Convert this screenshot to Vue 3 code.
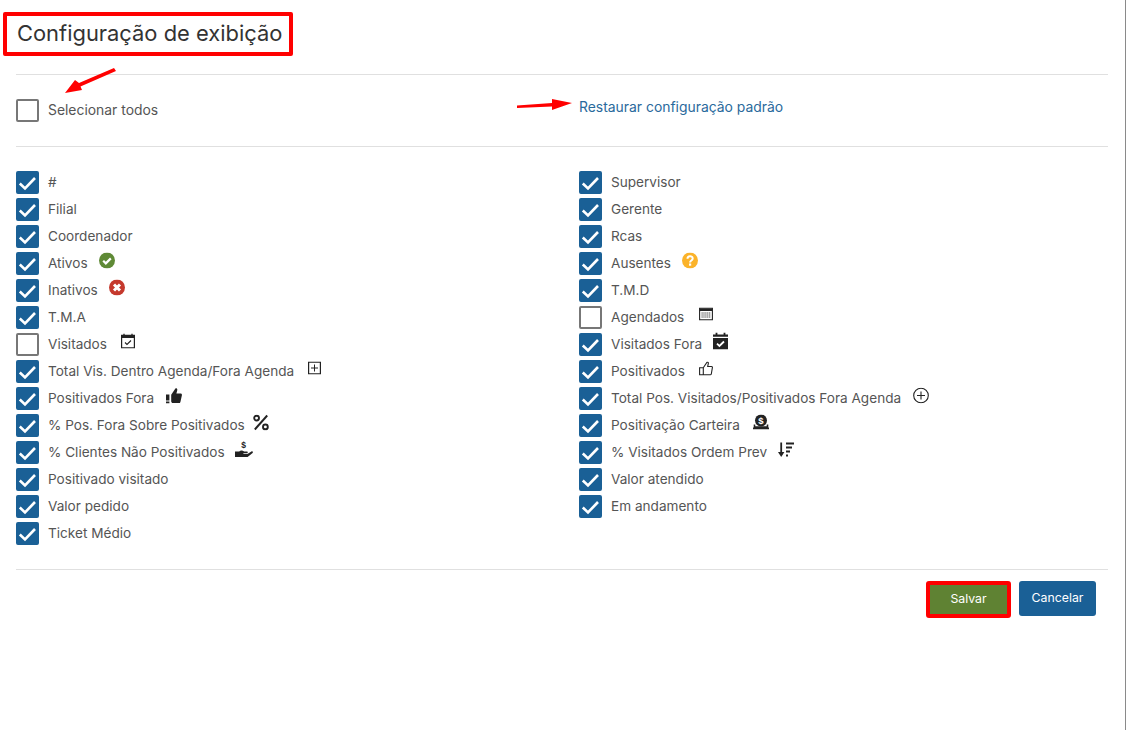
<script setup>
const icons = {
  ok: { vb: '0 0 16 16', w: 16, h: 16, gap: 11, svg: '<circle cx="8" cy="8" r="8" fill="#5f8a36"/><path d="M4.200 8.300l2.600 2.600 5-5" fill="none" stroke="#fff" stroke-width="2.200"/>' },
  no: { vb: '0 0 16 16', w: 16, h: 16, gap: 11, svg: '<circle cx="8" cy="8" r="8" fill="#c5392d"/><path d="M5 5l6 6M11 5l-6 6" fill="none" stroke="#fff" stroke-width="3"/>' },
  help: { vb: '0 0 16 16', w: 16, h: 16, gap: 11, svg: '<circle cx="8" cy="8" r="8" fill="#fbb32a"/><path d="M5.500 6.200c0-3.200 5.200-3.200 5.200-.2 0 2-2.600 1.900-2.600 3.900" fill="none" stroke="#fff" stroke-width="2"/><rect x="7" y="11" width="2.200" height="2.200" fill="#fff"/>' },
  calCheck: { vb: '0 0 14 15', w: 14, h: 15, gap: 14, svg: '<path d="M3 0v2M11 0v2" stroke="#222" stroke-width="1.300"/><path d="M.6 1.800h12.800v12.600H.6z" fill="none" stroke="#222" stroke-width="1.200"/><path d="M.6 2h12.800v2.600H.6z" fill="#222"/><path d="M4 9l2 2 4-4" fill="none" stroke="#222" stroke-width="1.100"/>' },
  plusBox: { vb: '0 0 13 13', w: 13, h: 13, gap: 14, svg: '<path d="M.6.6h11.800v11.800H.6z" fill="none" stroke="#222" stroke-width="1.200"/><path d="M6.500 3v7M3 6.500h7" stroke="#222" stroke-width="1"/>' },
  thumbFill: { vb: '0 0 16 16', w: 16, h: 16, gap: 12, svg: '<path d="M5.200 7.200L9.400 1c1.400-.6 2.200.6 1.800 1.900L10.400 6h4.200c1 0 1.500.9 1.300 1.800l-1.500 6.600c-.2.8-.9 1.200-1.600 1.200H7c-1 0-1.800-.8-1.800-1.800z" fill="#222"/><path d="M0 7h3.400v6H0zM0 14h3.400v2H0z" fill="#222"/>' },
  percent: { vb: '0 0 16 16', w: 16, h: 16, gap: 8, svg: '<circle cx="3.600" cy="3.600" r="2.400" fill="none" stroke="#222" stroke-width="1.900"/><circle cx="12.400" cy="12.400" r="2.400" fill="none" stroke="#222" stroke-width="1.900"/><path d="M14.200 1L1.800 15" stroke="#222" stroke-width="1.900"/>' },
  hand: { vb: '0 0 18 17', w: 18, h: 17, gap: 10, svg: '<text x="6.200" y="7" font-family="Liberation Sans, sans-serif" font-size="8.500" font-weight="700" fill="#222">$</text><path d="M0 11h4.200c1.300-1.400 3.200-1.400 5 0h2.600c1.300 0 1.300 1.800 0 1.800H8.400v.7h4L16.400 11c1.200-.6 2 .6 1.200 1.400L12.600 16.400H0z" fill="#222"/>' },
  calTable: { vb: '0 0 14 13', w: 14, h: 13, gap: 15, svg: '<path d="M.6.6h12.800v11.800H.6z" fill="none" stroke="#222" stroke-width="1.100"/><path d="M.6 1h12.800v2.400H.6z" fill="#222"/><path d="M2.500 5.500h9M2.500 7.500h9M2.500 9.500h9" stroke="#333" stroke-width="1" stroke-dasharray="1.200 .7"/>' },
  calFill: { vb: '0 0 15 17', w: 15, h: 17, gap: 11, svg: '<path d="M3.500 0v3M11.500 0v3" stroke="#222" stroke-width="1.800"/><path d="M0 2h15v2.200H0zM0 5.600h15V17H0z" fill="#222"/><path d="M4 11.200l2.400 2.300 4.600-4.500" fill="none" stroke="#fff" stroke-width="1.800"/>' },
  thumbLine: { vb: '0 0 14 14', w: 14, h: 14, gap: 14, svg: '<path d="M4.300 6.200L8 .7c1-.3 1.500.5 1.300 1.400L8.700 5h3.800c.7 0 1 .6.9 1.200l-1.100 6.300c-.1.5-.5.9-1 .9H4.300zM.6 6.200h3.700v7.200H.6z" fill="none" stroke="#222" stroke-width="1.100"/>' },
  plusCircle: { vb: '0 0 16 16', w: 16, h: 16, gap: 12, svg: '<circle cx="8" cy="8" r="7.300" fill="none" stroke="#222" stroke-width="1.100"/><path d="M8 4v8M4 8h8" stroke="#222" stroke-width="1.100"/>' },
  money: { vb: '0 0 16 15', w: 16, h: 15, gap: 13, svg: '<circle cx="8" cy="6" r="6" fill="#222"/><text x="5.300" y="9.400" font-family="Liberation Sans, sans-serif" font-size="9.500" font-weight="700" fill="#fff">$</text><path d="M1.500 10v2.600h13V10" fill="none" stroke="#222" stroke-width="1.600"/><path d="M0 13h16v2H0z" fill="#222"/>' },
  sort: { vb: '0 0 16 16', w: 16, h: 16, gap: 11, svg: '<path d="M3.200 1v12" stroke="#222" stroke-width="1.800"/><path d="M0 10.600h6.400L3.200 15.600z" fill="#222"/><path d="M8 2h8M8 6h6M8 10h4M8 14h2" stroke="#222" stroke-width="1.800"/>' }
}

const left = [
  { label: '#', on: true },
  { label: 'Filial', on: true },
  { label: 'Coordenador', on: true },
  { label: 'Ativos', on: true, icon: 'ok' },
  { label: 'Inativos', on: true, icon: 'no' },
  { label: 'T.M.A', on: true },
  { label: 'Visitados', on: false, icon: 'calCheck' },
  { label: 'Total Vis. Dentro Agenda/Fora Agenda', on: true, icon: 'plusBox' },
  { label: 'Positivados Fora', on: true, icon: 'thumbFill' },
  { label: '% Pos. Fora Sobre Positivados', on: true, icon: 'percent' },
  { label: '% Clientes Não Positivados', on: true, icon: 'hand' },
  { label: 'Positivado visitado', on: true },
  { label: 'Valor pedido', on: true },
  { label: 'Ticket Médio', on: true }
]
const right = [
  { label: 'Supervisor', on: true },
  { label: 'Gerente', on: true },
  { label: 'Rcas', on: true },
  { label: 'Ausentes', on: true, icon: 'help' },
  { label: 'T.M.D', on: true },
  { label: 'Agendados', on: false, icon: 'calTable' },
  { label: 'Visitados Fora', on: true, icon: 'calFill' },
  { label: 'Positivados', on: true, icon: 'thumbLine' },
  { label: 'Total Pos. Visitados/Positivados Fora Agenda', on: true, icon: 'plusCircle' },
  { label: 'Positivação Carteira', on: true, icon: 'money' },
  { label: '% Visitados Ordem Prev', on: true, icon: 'sort' },
  { label: 'Valor atendido', on: true },
  { label: 'Em andamento', on: true }
]
const columns = [left, right]
</script>

<template>
  <div class="page">
    <header class="head">
      <h1 class="title">Configuração de exibição</h1>
    </header>
    <hr class="rule" />
    <section class="top">
      <label class="row select-all">
        <span class="box"></span>
        <span class="text wide">Selecionar todos</span>
      </label>
      <a class="restore">Restaurar configuração padrão</a>
      <svg class="arrow arrow-a" width="60" height="34" viewBox="0 0 60 34">
        <path d="M51 0L16 15l-4-3L2 25l17-3-1.500-3.500L53 3z" fill="#f00" />
      </svg>
      <svg class="arrow arrow-b" width="58" height="16" viewBox="0 0 58 16">
        <path d="M0 8.500L35 6V2l20 4-20 7V9.500L0 11z" fill="#f00" />
      </svg>
    </section>
    <hr class="rule" />
    <section class="grid">
      <div v-for="(col, c) in columns" :key="c" class="col">
        <div v-for="item in col" :key="item.label" class="row">
          <span class="box" :class="{ on: item.on }">
            <svg v-if="item.on" width="19" height="19" viewBox="0 0 19 19">
              <path d="M1.800 10.500L7 15.500 17 5" fill="none" stroke="#fff" stroke-width="2.600" />
            </svg>
          </span>
          <span class="text">{{ item.label }}</span>
          <svg
            v-if="item.icon"
            class="icon"
            :width="icons[item.icon].w"
            :height="icons[item.icon].h"
            :viewBox="icons[item.icon].vb"
            :style="{ marginLeft: icons[item.icon].gap + 'px' }"
            v-html="icons[item.icon].svg"
          ></svg>
        </div>
      </div>
    </section>
    <hr class="rule" />
    <footer class="foot">
      <button class="btn save">Salvar</button>
      <button class="btn cancel">Cancelar</button>
    </footer>
  </div>
</template>

<style>
html, body { margin: 0; background: #fff; }
</style>

<style scoped>
.page {
  box-sizing: border-box;
  width: 1126px;
  height: 730px;
  padding: 12px 17px 0 16px;
  border-right: 1px solid #8a8a8a;
  font-family: Inter, Roboto, sans-serif;
  color: #555;
  overflow: hidden;
}
.head { height: 62px; margin-left: -13px; }
.title {
  display: inline-block;
  box-sizing: border-box;
  width: 290px;
  height: 44px;
  margin: 0;
  padding: 0 0 0 10px;
  border: 4px solid #f00;
  border-radius: 2px;
  font-size: 21.900px;
  font-weight: 400;
  line-height: 34px;
  color: #333;
  white-space: nowrap;
}
.rule { margin: 0; border: 0; border-top: 1px solid #e0e0e0; }
.top {
  position: relative;
  height: 71px;
}
.select-all { position: absolute; left: 0; top: 21px; }
.restore {
  position: absolute;
  left: 563px;
  top: 22px;
  font-size: 13.900px;
  line-height: 20px;
  color: #2a6a9c;
  white-space: nowrap;
}
.arrow { position: absolute; }
.arrow-a { left: 47px; top: -7px; }
.arrow-b { left: 501px; top: 22px; }
.grid {
  display: grid;
  grid-template-columns: 529px 529px;
  column-gap: 34px;
  padding: 21px 0 23px;
}
.row {
  display: flex;
  align-items: center;
  height: 27px;
}
.box {
  box-sizing: border-box;
  flex: none;
  width: 23px;
  height: 23px;
  margin: 2px 9px 0 0;
  border: 2px solid #777;
  border-radius: 2px;
  background: #fff;
}
.box.on { background: #1a6096; border-color: #1a6096; }
.box svg { display: block; }
.text { font-size: 13.600px; line-height: 20px; white-space: nowrap; }
.text.wide { font-size: 13.900px; }
.icon { flex: none; transform: translateY(-2.500px); }
.foot {
  display: flex;
  justify-content: flex-end;
  align-items: flex-start;
  gap: 8px;
  padding: 11px 12px 0 0;
}
.btn {
  box-sizing: border-box;
  height: 35px;
  border: 0;
  border-radius: 3px;
  font-family: inherit;
  font-size: 12.300px;
  color: #fff;
  padding: 0 0 2px;
}
.save {
  width: 85px;
  height: 37px;
  background: #5f8233;
  border: 4px solid #f00;
}
.cancel { width: 77px; background: #1a6096; }
</style>
